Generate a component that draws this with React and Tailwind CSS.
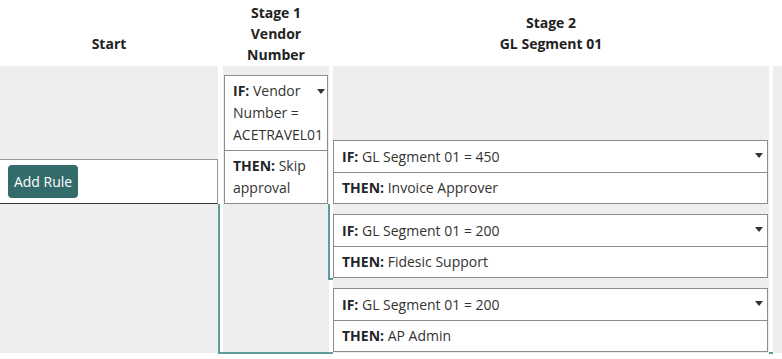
import React from "react";

const stageTwoRules = [
  { cond: "GL Segment 01 = 450", then: "Invoice Approver" },
  { cond: "GL Segment 01 = 200", then: "Fidesic Support" },
  { cond: "GL Segment 01 = 200", then: "AP Admin" },
];

const Caret = ({ className = "" }) => (
  <span className={`block h-0 w-0 border-x-[4.5px] border-t-[5px] border-x-transparent border-t-[#333] ${className}`} />
);

function RuleCard({ cond, then, compact }) {
  return (
    <div className="border border-[#8c8c8c] bg-white">
      <div className={`relative py-1 ${compact ? "leading-[22px] pl-2 pr-[3px]" : "leading-[23px] pl-2 pr-6"}`}>
        {compact && <Caret className="float-right mt-[9px] mr-[-1px] ml-1" />}
        {!compact && <Caret className="absolute right-[4px] top-[12px]" />}
        <span className="font-bold text-[#212529]">IF:</span> <span className="text-[#333]">{cond}</span>
      </div>
      <div className="border-t border-[#8c8c8c] pl-2 pr-[3px] py-1 leading-[22px]">
        <span className="font-bold text-[#212529]">THEN:</span> <span className="text-[#333]">{then}</span>
      </div>
    </div>
  );
}

export default function App() {
  return (
    <div className="relative h-[359px] w-[782px] overflow-hidden bg-white font-['Open_Sans',sans-serif] text-[14px] text-[#222]">
      <div className="flex h-[66px] text-[14px] font-bold leading-[21px] text-[#222]">
        <div className="flex w-[218px] items-end justify-center pb-[12px]">Start</div>
        <div className="ml-[5px] flex w-[106px] flex-col items-center justify-end pb-[1px] text-center">
          <span>Stage 1</span>
          <span>Vendor</span>
          <span>Number</span>
        </div>
        <div className="ml-[4px] flex w-[436px] flex-col items-center justify-end pb-[12px] text-center">
          <span>Stage 2</span>
          <span>GL Segment 01</span>
        </div>
      </div>

      <div className="flex h-[287px]">
        <div className="w-[218px] bg-[#eeeeee] pt-[93px]">
          <div className="flex h-[45px] items-center border-y border-r border-[#999] border-b-[#333] bg-white pl-2">
            <button className="h-[33px] w-[70px] rounded-[4px] bg-[#336b6b] text-[14px] text-white">Add Rule</button>
          </div>
        </div>

        <div className="ml-[5px] w-[106px] bg-[#eeeeee] px-px pt-[9px]">
          <RuleCard compact cond="Vendor Number = ACETRAVEL01" then="Skip approval" />
        </div>

        <div className="ml-[4px] flex w-[436px] flex-col gap-[10px] bg-[#eeeeee] pr-px pt-[74px]">
          {stageTwoRules.map((r, i) => (
            <RuleCard key={i} cond={r.cond} then={r.then} />
          ))}
        </div>

        <div className="ml-[4px] flex-1 bg-[#eeeeee]" />
      </div>

      {/* connectors */}
      <div className="absolute left-[218px] top-[204px] h-[150px] w-[115px] border-b-2 border-l-2 border-[#5f9b9b]" />
      <div className="absolute left-[328px] top-[204px] h-[76px] w-[5px] border-b-2 border-l-2 border-[#5f9b9b]" />
      <div className="absolute left-[769px] top-[352px] h-[2px] w-[4px] bg-[#5f9b9b]" />
    </div>
  );
}
